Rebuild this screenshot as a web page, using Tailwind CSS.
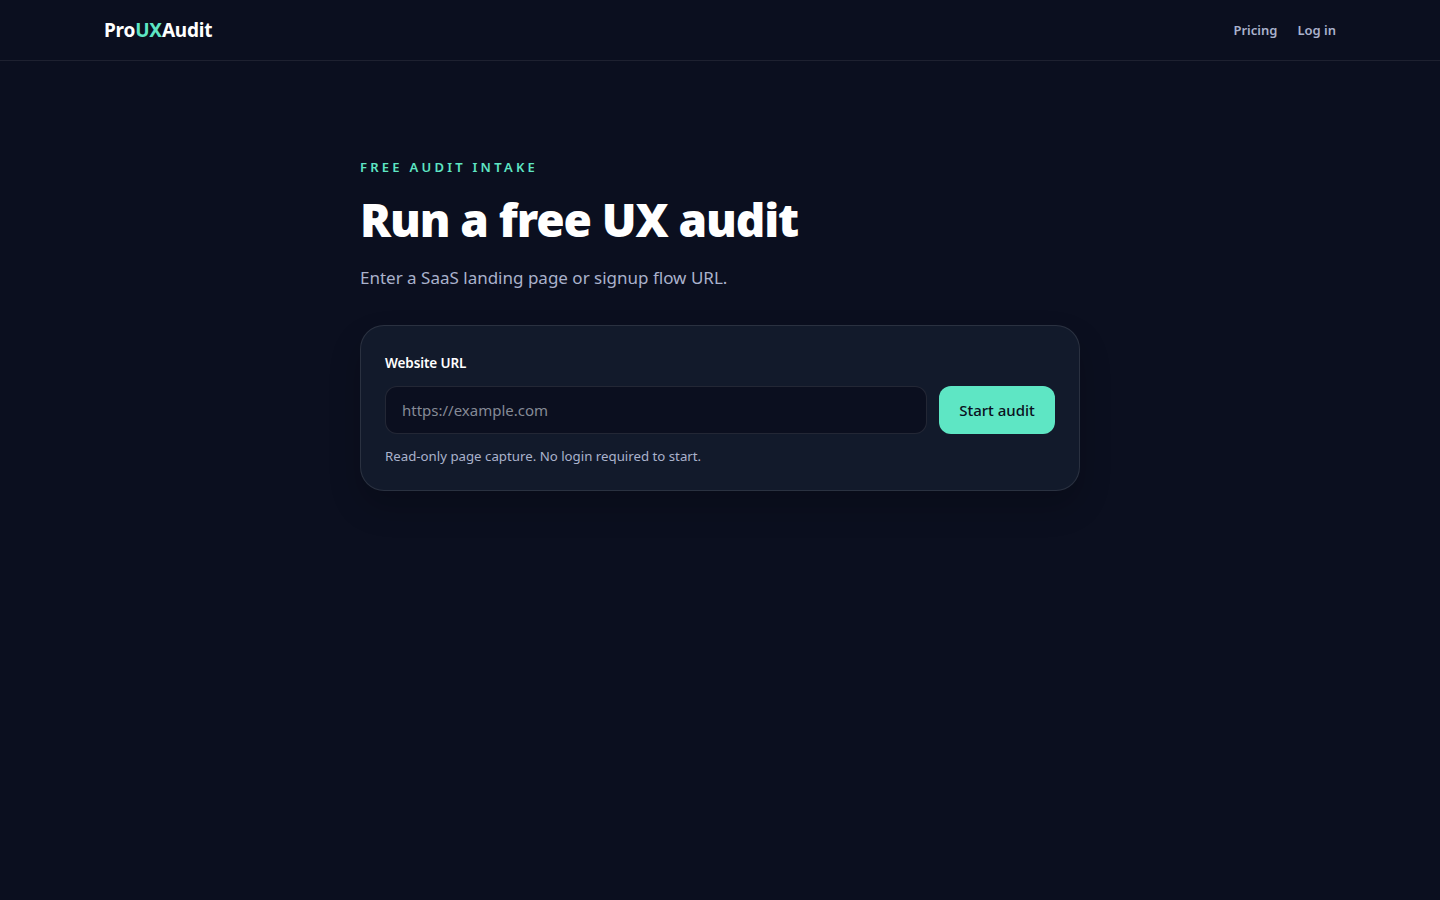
<!DOCTYPE html>
<html lang="en">

<head>
  <meta charset="UTF-8">
  <meta name="viewport" content="width=device-width, initial-scale=1.0">
  <script src="https://cdn.jsdelivr.net/npm/@tailwindcss/browser@4"></script>
  <title>Run a free UX audit</title>
</head>

<body class="bg-[#0b0f1f] min-h-screen font-['Noto_Sans','Open_Sans',sans-serif] text-white">
  <header class="h-[61px] border-b border-white/8">
    <div class="max-w-[1280px] mx-auto px-6 h-full flex items-center justify-between">
      <a href="#" class="pt-px text-[19px] font-bold tracking-[-0.2px]">Pro<span class="text-[#5ee6c4]">UX</span>Audit</a>
      <nav class="flex items-center gap-5 pt-px text-[13px] font-semibold text-[#aab2cc]">
        <a href="#">Pricing</a>
        <a href="#">Log in</a>
      </nav>
    </div>
  </header>

  <main class="max-w-[720px] mx-auto pt-[96px]">
    <p class="text-[13px] leading-5 font-semibold tracking-[3.25px] text-[#5ee6c4]">FREE AUDIT INTAKE</p>
    <h1 class="mt-3 text-[46px] leading-[60px] font-black tracking-[-1.1px]">Run a free UX audit</h1>
    <p class="mt-[15px] text-[17px] leading-7 text-[#aab2cc]">Enter a SaaS landing page or signup flow URL.</p>

    <form class="mt-[33px] p-6 bg-[#121a2b] border border-white/10 rounded-3xl shadow-[0_16px_32px_rgba(0,0,0,0.2)]">
      <label for="url" class="block pt-px text-[13.5px] leading-6 font-semibold tracking-[-0.1px]">Website URL</label>
      <div class="mt-[11px] flex gap-3">
        <input id="url" type="text" placeholder="https://example.com" class="flex-1 min-w-0 h-12 px-4 rounded-xl bg-[#0b0f1f] border border-white/10 text-[15px] placeholder:text-[#858a96] outline-none">
        <button type="submit" class="w-[116px] h-12 rounded-xl bg-[#5ee6c4] text-[#0b1020] text-[15px] font-medium">Start audit</button>
      </div>
      <p class="mt-3 text-[13.25px] leading-5 text-[#aab2cc]">Read-only page capture. No login required to start.</p>
    </form>
  </main>
</body>

</html>
